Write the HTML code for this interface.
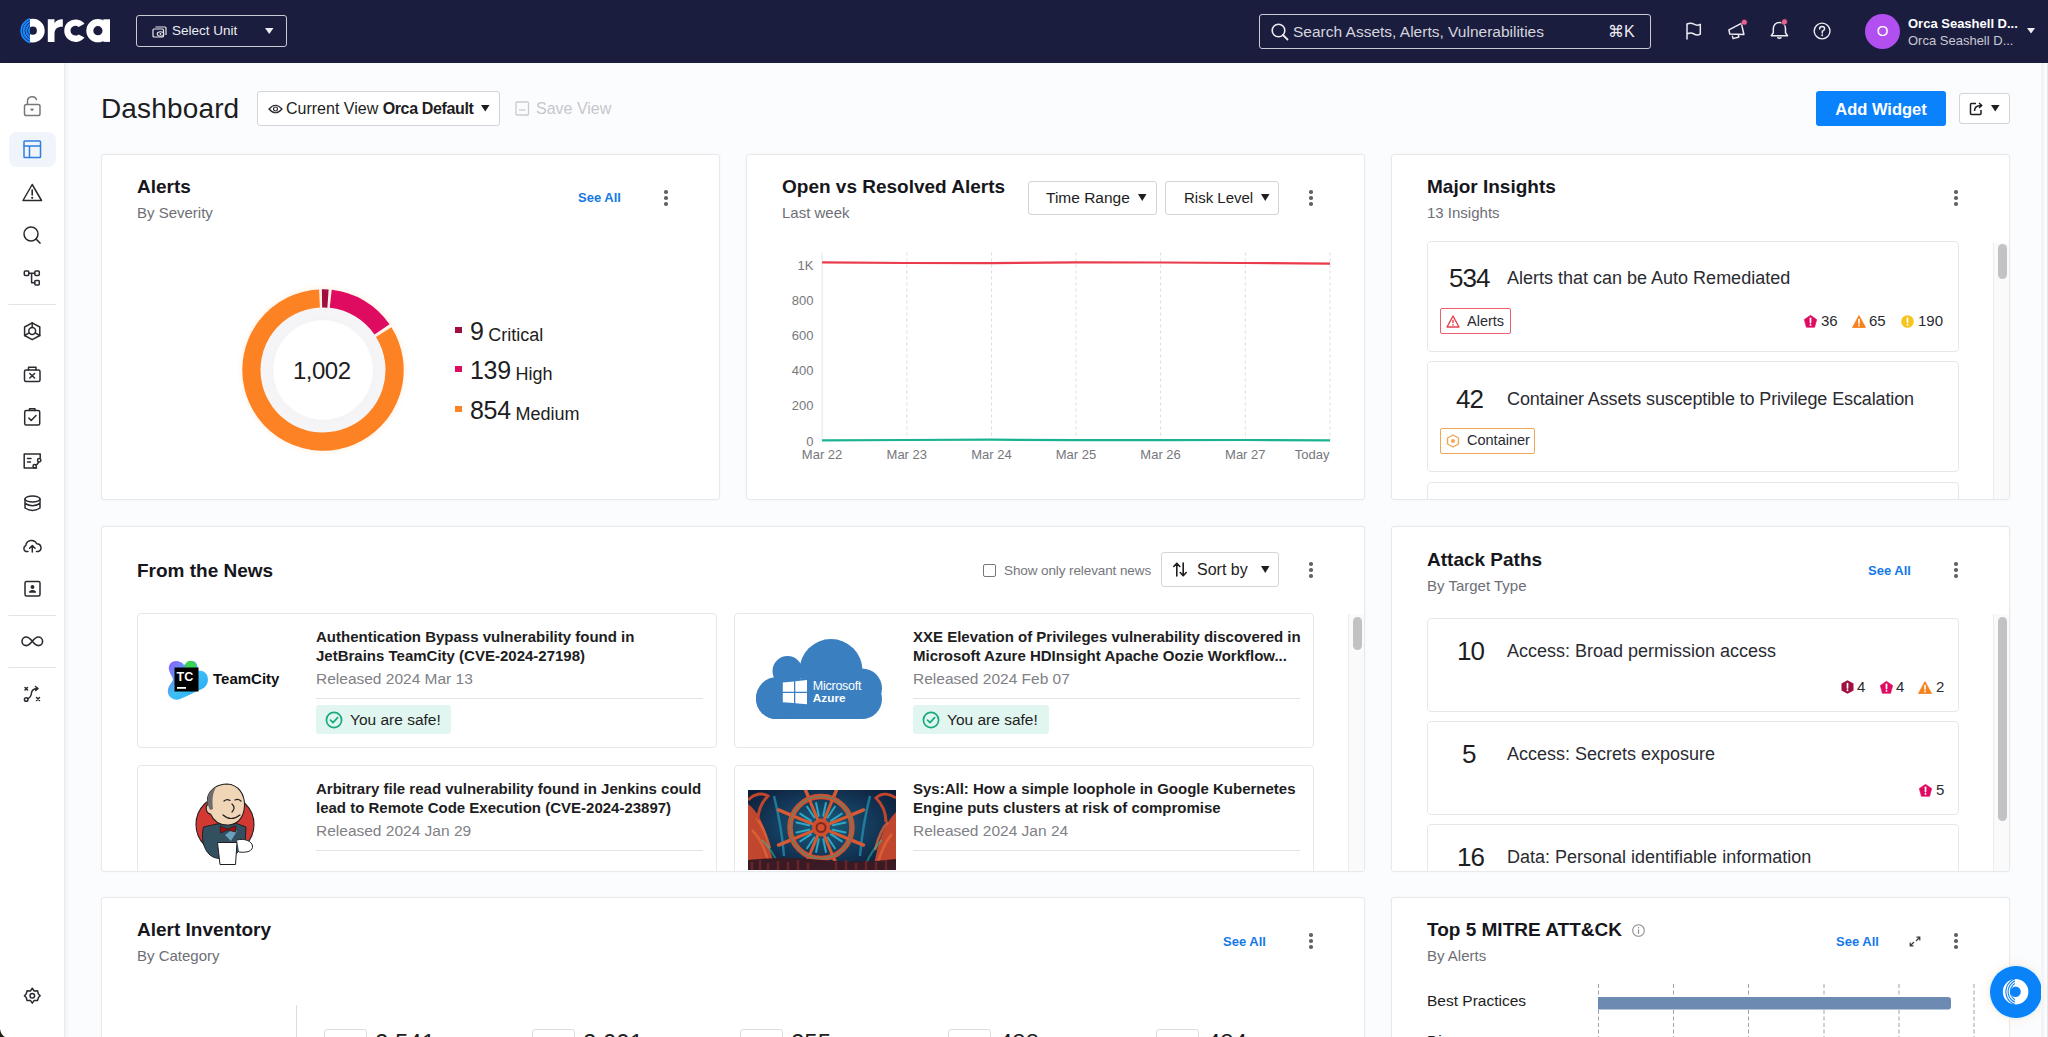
<!DOCTYPE html>
<html><head><meta charset="utf-8">
<style>
*{box-sizing:border-box;margin:0;padding:0}
html,body{width:2048px;height:1037px;overflow:hidden;background:#fbfcfe;font-family:"Liberation Sans",sans-serif;color:#1d1d22}
.abs{position:absolute}
#hdr{position:absolute;left:0;top:0;width:2048px;height:63px;background:#1b1d3e}
#side{position:absolute;left:0;top:63px;width:65px;height:974px;background:#fff;border-right:1px solid #e9eaee;box-shadow:2px 0 4px rgba(0,0,0,0.05)}
.card{position:absolute;background:#fff;border:1px solid #e8e9ec;border-radius:3px;box-shadow:0 0 3px rgba(0,0,0,0.04)}
.ttl{position:absolute;font-weight:bold;font-size:19px;color:#16161c;white-space:nowrap}
.sub{position:absolute;font-size:15px;color:#6e6f76;white-space:nowrap}
.seeall{position:absolute;font-weight:bold;font-size:13px;color:#1479e6;white-space:nowrap}
.kebab{position:absolute;width:4px;height:16px}
.kebab i{position:absolute;left:0.2px;width:3.6px;height:3.6px;border-radius:50%;background:#626369}
.t{position:absolute;white-space:nowrap}
svg{position:absolute;overflow:visible}
.item{position:absolute;background:#fff;border:1px solid #e6e7eb;border-radius:4px}
.num{position:absolute;font-size:26px;letter-spacing:-1px;color:#1d1d22;white-space:nowrap}
.itxt{position:absolute;font-size:18px;margin-top:1.5px;color:#2a2b31;white-space:nowrap}
.ntl{position:absolute;font-size:15px;font-weight:bold;line-height:19px;color:#1d1d22;white-space:nowrap}
.nrel{position:absolute;font-size:15.5px;color:#808186;white-space:nowrap}
.safe{position:absolute;height:29px;border-radius:3px;background:#e1f6f0}
.cnt{position:absolute;font-size:15px;color:#2a2b31;white-space:nowrap}
</style></head>
<body>
<div id="hdr">
<svg style="left:0;top:0" width="130" height="63" viewBox="0 0 130 63">
 <defs><clipPath id="lo"><rect x="0" y="0" width="30" height="63"/></clipPath><clipPath id="lr"><rect x="30" y="0" width="30" height="63"/></clipPath></defs>
 <circle cx="32.8" cy="30.7" r="8" fill="none" stroke="#fff" stroke-width="7.8" clip-path="url(#lr)"/>
 <g clip-path="url(#lo)" fill="none" stroke="#1a86ff" stroke-width="1.9">
  <circle cx="33.5" cy="30.7" r="4.6"/><circle cx="33.5" cy="30.7" r="7.2"/><circle cx="33.5" cy="30.7" r="9.8"/><circle cx="33.5" cy="30.7" r="12.2"/>
 </g>
 <path d="M47.8,19.3 H54.5 V23 C56.5,20 59.5,19 62.8,19.2 V26.8 C57.5,26.5 54.5,29 54.5,34 V41.9 H47.8 Z" fill="#fff"/>
 <path d="M84.5,23.8 A11.3,11.3 0 1 0 84.5,37.6 L78.6,34.4 A4.9,4.9 0 1 1 78.6,27 Z" fill="#fff"/>
 <circle cx="97.9" cy="30.7" r="8.1" fill="none" stroke="#fff" stroke-width="7"/>
 <rect x="103.3" y="19.3" width="6.7" height="22.6" fill="#fff"/>
</svg>
<div class="abs" style="left:136px;top:15px;width:151px;height:32px;border:1.5px solid #c9cad3;border-radius:3px"></div>
<svg style="left:152px;top:26px" width="15" height="12" viewBox="0 0 15 12">
 <path d="M3.5,1 H13 Q14,1 14,2 V9" fill="none" stroke="#e8e8ee" stroke-width="1.2"/>
 <rect x="1" y="3" width="10.5" height="8" rx="1" fill="none" stroke="#e8e8ee" stroke-width="1.2"/>
 <ellipse cx="8.5" cy="8" rx="3.3" ry="2.2" fill="#1b1d3e" stroke="#e8e8ee" stroke-width="1.1"/>
 <circle cx="8.5" cy="8" r="0.9" fill="#e8e8ee"/>
</svg>
<div class="t" style="left:172px;top:23px;font-size:13.5px;color:#ececf2">Select Unit</div>
<svg style="left:265px;top:28px" width="9" height="6" viewBox="0 0 9 6"><path d="M0,0 H8.5 L4.25,6 Z" fill="#ececf2"/></svg>

<div class="abs" style="left:1259px;top:14px;width:392px;height:35px;border:1.5px solid #c9cad3;border-radius:3px"></div>
<svg style="left:1271px;top:23px" width="18" height="18" viewBox="0 0 18 18"><circle cx="7.5" cy="7.5" r="6.3" fill="none" stroke="#ececf2" stroke-width="1.6"/><path d="M12,12 L16.5,16.5" stroke="#ececf2" stroke-width="1.8" stroke-linecap="round"/></svg>
<div class="t" style="left:1293px;top:23px;font-size:15.5px;color:#d4d5dd">Search Assets, Alerts, Vulnerabilities</div>
<div class="t" style="left:1608px;top:22px;font-size:16px;color:#ececf2">&#8984;K</div>

<svg style="left:1684px;top:20px" width="19" height="21" viewBox="0 0 19 21"><path d="M3,19 V4 C5.5,2.8 8,3 10,4.2 C12,5.4 14.2,5.5 16.3,4.4 V14.2 C14.2,15.3 12,15.2 10,14 C8,12.8 5.5,12.8 3,14" fill="none" stroke="#ececf2" stroke-width="1.5" stroke-linejoin="round" stroke-linecap="round"/></svg>
<svg style="left:1726px;top:20px" width="22" height="21" viewBox="0 0 22 21"><path d="M2.9,9.9 L15.4,3.3 L17.9,14.5 L3.8,14.1 Z" fill="none" stroke="#ececf2" stroke-width="1.5" stroke-linejoin="round"/><path d="M6.3,15.8 L7.1,18.6 L12.9,17 L12.4,15" fill="none" stroke="#ececf2" stroke-width="1.4" stroke-linejoin="round"/><circle cx="18.3" cy="2.2" r="3.6" fill="#5a1f45" opacity="0.6"/><circle cx="18.3" cy="2.2" r="2.5" fill="#e2658f"/></svg>
<svg style="left:1769px;top:20px" width="22" height="20" viewBox="0 0 22 20"><path d="M2.3,15.7 H18.5 L16.5,12.8 V8.8 C16.5,5 14,2.5 10.4,2.5 C6.8,2.5 4.3,5 4.3,8.8 V12.8 Z M8.4,17.4 Q10.4,19.2 12.4,17.4" fill="none" stroke="#ececf2" stroke-width="1.5" stroke-linejoin="round"/><circle cx="15.5" cy="1.8" r="3.6" fill="#5a1f45" opacity="0.6"/><circle cx="15.5" cy="1.8" r="2.5" fill="#e2658f"/></svg>
<svg style="left:1812px;top:21px" width="20" height="20" viewBox="0 0 20 20"><circle cx="10.1" cy="10" r="7.9" fill="none" stroke="#ececf2" stroke-width="1.4"/><path d="M7.6,8 Q7.6,5.4 10.1,5.4 Q12.6,5.4 12.6,7.7 Q12.6,9.3 10.3,10.2 V11.9" fill="none" stroke="#ececf2" stroke-width="1.5" stroke-linecap="round"/><circle cx="10.2" cy="14.3" r="0.95" fill="#ececf2"/></svg>

<div class="abs" style="left:1865px;top:14px;width:35px;height:35px;border-radius:50%;background:#b24ff1"></div>
<div class="t" style="left:1865px;top:22px;width:35px;text-align:center;font-size:15px;color:#fff">O</div>
<div class="t" style="left:1908px;top:16px;font-size:13px;font-weight:bold;color:#fff">Orca Seashell D...</div>
<div class="t" style="left:1908px;top:33px;font-size:13px;color:#c8c9d2">Orca Seashell D...</div>
<svg style="left:2027px;top:28px" width="9" height="6" viewBox="0 0 9 6"><path d="M0,0 H8 L4,5.5 Z" fill="#ececf2"/></svg>
</div>
<div id="side">
<div class="abs" style="left:9px;top:69px;width:47px;height:35px;border-radius:8px;background:#f0f5fc"></div>
<svg style="left:0;top:0" width="64" height="974" viewBox="0 63 64 974">
 <g fill="none" stroke="#2a2b31" stroke-width="1.5" stroke-linejoin="round" stroke-linecap="round">
  <!-- lock -->
  <g stroke="#77787e"><rect x="24.5" y="104.5" width="15.5" height="11" rx="1.8"/><path d="M27.5,104.5 V101.5 A4.7,4.7 0 0 1 36.5,99.5"/><path d="M31,109 L33.4,109 L32.2,110.6 Z" fill="#77787e" stroke-width="1"/></g>
  <!-- dashboard -->
  <g stroke="#2f7fe0"><rect x="24" y="141" width="16.5" height="16.5" rx="0.8"/><path d="M24,146 H40.5 M29.5,146 V157.5"/></g>
  <!-- warning -->
  <path d="M32.2,184.5 L41.5,200.5 H23 Z"/><path d="M32.2,190 V195" stroke-width="1.6"/><circle cx="32.2" cy="197.8" r="0.5" stroke-width="1.2"/>
  <!-- search -->
  <circle cx="31" cy="234" r="7"/><path d="M36,239 L40,243" stroke-width="1.7"/>
  <!-- tree -->
  <rect x="24.3" y="271" width="4.5" height="4.5" rx="1"/><rect x="34.8" y="271" width="4.5" height="4.5" rx="1"/><rect x="34.8" y="280.5" width="4.5" height="4.5" rx="1"/><path d="M28.8,273.2 H34.8 M31.6,273.2 V282.8 H34.8"/>
 </g>
 <path d="M8.5,304.5 H56" stroke="#e3e4e8" stroke-width="1"/>
 <g fill="none" stroke="#2a2b31" stroke-width="1.5" stroke-linejoin="round" stroke-linecap="round">
  <!-- hex network -->
  <path d="M32.2,322.8 L39.8,327 V335.5 L32.2,339.7 L24.6,335.5 V327 Z"/><circle cx="32.2" cy="331" r="3.4"/><path d="M32.2,322.8 V327.6 M24.6,335.5 L29.2,332.8 M39.8,335.5 L35.2,332.8"/>
  <!-- briefcase x -->
  <rect x="24.5" y="370" width="15.5" height="11.5" rx="1.5"/><path d="M28.5,370 V367.2 H36 V370"/><path d="M29.8,373.5 L34.6,378 M34.6,373.5 L29.8,378"/>
  <!-- clipboard -->
  <rect x="24.7" y="410.5" width="15" height="14.5" rx="1.5"/><path d="M29.5,410.5 V408.7 H35 V410.5"/><path d="M28.8,418 L31.2,420.4 L36,415.5"/>
  <!-- list form -->
  <path d="M36.5,468 H24.2 V454 H40.2 V457.5"/><path d="M27.5,458.5 H31 M27.5,462 H30.5"/><circle cx="39.2" cy="460.3" r="1.7"/><circle cx="34.7" cy="466.3" r="1.7"/><path d="M38.5,462 Q37.5,465 35.5,464.8"/>
  <!-- database -->
  <ellipse cx="32.5" cy="499" rx="7.5" ry="3"/><path d="M25,499 V508 Q32.5,513 40,508 V499 M25,503.5 Q32.5,508 40,503.5"/>
  <!-- cloud -->
  <path d="M28,551.5 H25.8 A3.3,3.3 0 0 1 25.8,545.5 A5.8,5.8 0 0 1 36.8,543.8 A4,4 0 0 1 38.5,551.5 H36.5"/><path d="M32.3,552 V545.8 M29.6,548.2 L32.3,545.5 L35,548.2"/>
  <!-- id card -->
  <rect x="25" y="581.5" width="15" height="14.5" rx="1.5"/><circle cx="32.5" cy="587" r="1.2" fill="#2a2b31"/><path d="M29.6,592 Q32.5,589.5 35.4,592 Z" fill="#2a2b31"/>
 </g>
 <path d="M8.5,615.5 H56" stroke="#e3e4e8" stroke-width="1"/>
 <g fill="none" stroke="#2a2b31" stroke-width="1.6" stroke-linejoin="round" stroke-linecap="round">
  <path d="M32.3,641.3 C29.5,637.8 27.5,637 26.3,637 A4.3,4.3 0 0 0 26.3,645.6 C27.5,645.6 29.5,644.8 32.3,641.3 C35.1,637.8 37.1,637 38.3,637 A4.3,4.3 0 0 1 38.3,645.6 C37.1,645.6 35.1,644.8 32.3,641.3 Z"/>
 </g>
 <path d="M8.5,667.5 H56" stroke="#e3e4e8" stroke-width="1"/>
 <g fill="none" stroke="#2a2b31" stroke-width="1.5" stroke-linejoin="round" stroke-linecap="round">
  <!-- route -->
  <path d="M25,687.5 L27.5,690 M27.5,687.5 L25,690 M36.5,697.5 L39.5,700.5 M39.5,697.5 L36.5,700.5"/><circle cx="26.2" cy="699.5" r="1.8"/><path d="M27.8,698.5 Q31,697.5 31.5,693 Q32,689 37,688.5 M35.5,686.5 L38,688.5 L35.8,690.5"/>
  <!-- gear -->
  <path d="M32.3,988.3 L34.2,991 L37.5,990.8 L38.4,994 L40.2,995.7 L38.4,997.5 L37.5,1000.6 L34.2,1000.4 L32.3,1003.1 L30.4,1000.4 L27.1,1000.6 L26.2,997.5 L24.4,995.7 L26.2,994 L27.1,990.8 L30.4,991 Z"/><circle cx="32.3" cy="995.7" r="2.3"/>
 </g>
</svg>
</div>

<!-- title row -->
<div class="t" style="left:101px;top:93px;font-size:28px;letter-spacing:0.15px;color:#1d1d22">Dashboard</div>
<div class="abs" style="left:257px;top:91px;width:243px;height:35px;border:1px solid #d3d4d9;border-radius:3px;background:#fff"></div>
<svg style="left:268px;top:104px" width="15" height="10" viewBox="0 0 15 10"><path d="M1,5 Q7.5,-2.5 14,5 Q7.5,12.5 1,5 Z" fill="none" stroke="#2a2b31" stroke-width="1.2"/><circle cx="7.5" cy="5" r="2" fill="none" stroke="#2a2b31" stroke-width="1.2"/></svg>
<div class="t" style="left:286px;top:100px;font-size:16px;color:#1d1d22">Current View <b style="letter-spacing:-0.35px">Orca Default</b></div>
<svg style="left:481px;top:105px" width="9" height="7" viewBox="0 0 9 7"><path d="M0,0 H8.5 L4.25,6.5 Z" fill="#1d1d22"/></svg>
<svg style="left:515px;top:101px" width="15" height="15" viewBox="0 0 15 15"><rect x="1" y="1" width="12.5" height="13" rx="1" fill="none" stroke="#c9cace" stroke-width="1.3"/><path d="M4,9 H10.5" stroke="#c9cace" stroke-width="1.3"/></svg>
<div class="t" style="left:536px;top:100px;font-size:16px;color:#c6c7cc">Save View</div>
<div class="abs" style="left:1816px;top:91px;width:130px;height:35px;border-radius:3px;background:#0a82fc"></div>
<div class="t" style="left:1816px;top:99.5px;width:130px;text-align:center;font-size:16.5px;font-weight:bold;color:#fff">Add Widget</div>
<div class="abs" style="left:1959px;top:93px;width:51px;height:31px;border:1px solid #d3d4d9;border-radius:3px;background:#fff"></div>
<svg style="left:1969px;top:101px" width="16" height="15" viewBox="0 0 16 15"><path d="M7,2.5 H2.5 Q1.5,2.5 1.5,3.5 V12.5 Q1.5,13.5 2.5,13.5 H11 Q12,13.5 12,12.5 V9" fill="none" stroke="#1d1d22" stroke-width="1.5"/><path d="M5.5,10 Q5.5,4.5 12,4.5 M10,2 L12.8,4.5 L10,7" fill="none" stroke="#1d1d22" stroke-width="1.5" stroke-linejoin="round"/></svg>
<svg style="left:1991px;top:105px" width="9" height="7" viewBox="0 0 9 7"><path d="M0,0 H8.5 L4.25,6.5 Z" fill="#1d1d22"/></svg>

<div class="card" style="left:101px;top:154px;width:619px;height:346px">
<div class="ttl" style="left:35px;top:21px">Alerts</div>
<div class="sub" style="left:35px;top:49px">By Severity</div>
<div class="seeall" style="left:476px;top:35px">See All</div>
<div class="kebab" style="left:562px;top:35px"><i style="top:0"></i><i style="top:6px"></i><i style="top:12px"></i></div>
</div>
<svg style="left:0;top:0" width="1" height="1"></svg>
<svg style="left:232px;top:278.5px" width="182" height="182" viewBox="-91 -91 182 182">
 <defs><filter id="sh" x="-50%" y="-50%" width="200%" height="200%"><feGaussianBlur stdDeviation="2"/></filter></defs>
 <circle cx="0" cy="0" r="71" fill="none" stroke="#ff8a2a" stroke-opacity="0.12" stroke-width="22" filter="url(#sh)"/>
 <circle cx="0" cy="0" r="56.5" fill="none" stroke="#f5f5f7" stroke-width="13"/>
 <circle cx="0" cy="0" r="50" fill="#fff"/>
 <circle cx="0" cy="0" r="50" fill="none" stroke="#e9eaee" stroke-width="1" filter="url(#sh)"/>
 <circle cx="0" cy="0" r="49" fill="#fff"/>
 <g fill="none" stroke-width="18.2">
  <path d="M60.72,-37.94 A71.6,71.6 0 1 1 -3.50,-71.51" stroke="#fd8223"/>
  <path d="M7.73,-71.18 A71.6,71.6 0 0 1 59.01,-40.55" stroke="#df0b60"/>
  <path d="M-1.00,-71.59 A71.6,71.6 0 0 1 4.99,-71.43" stroke="#a0103f"/>
 </g>
</svg>
<div class="t" style="left:293px;top:357px;font-size:24px;letter-spacing:-0.5px;color:#1d1d22">1,002</div>
<div class="abs" style="left:455px;top:327px;width:7px;height:6px;background:#a0103f"></div>
<div class="abs" style="left:455px;top:366px;width:7px;height:6px;background:#df0b60"></div>
<div class="abs" style="left:455px;top:406px;width:7px;height:6px;background:#fd8223"></div>
<div class="t" style="left:470px;top:317px;font-size:25px;letter-spacing:-0.3px;color:#1d1d22">9 <span style="font-size:18px;letter-spacing:0;position:relative;top:0.5px;margin-left:-2px">Critical</span></div>
<div class="t" style="left:470px;top:356px;font-size:25px;letter-spacing:-0.3px;color:#1d1d22">139 <span style="font-size:18px;letter-spacing:0;position:relative;top:0.5px;margin-left:-2px">High</span></div>
<div class="t" style="left:470px;top:396px;font-size:25px;letter-spacing:-0.3px;color:#1d1d22">854 <span style="font-size:18px;letter-spacing:0;position:relative;top:0.5px;margin-left:-2px">Medium</span></div>
<div class="card" style="left:746px;top:154px;width:619px;height:346px">
<div class="ttl" style="left:35px;top:21px">Open vs Resolved Alerts</div>
<div class="sub" style="left:35px;top:49px">Last week</div>
<div class="abs" style="left:281px;top:26px;width:129px;height:34px;border:1px solid #d3d4d9;border-radius:3px"></div>
<div class="t" style="left:299px;top:34px;font-size:15.5px;color:#1d1d22">Time Range</div>
<svg style="left:391px;top:38.5px" width="9" height="7" viewBox="0 0 9 7"><path d="M0,0 H8.5 L4.25,7 Z" fill="#1d1d22"/></svg>
<div class="abs" style="left:418px;top:26px;width:114px;height:34px;border:1px solid #d3d4d9;border-radius:3px"></div>
<div class="t" style="left:437px;top:34px;font-size:15px;color:#1d1d22">Risk Level</div>
<svg style="left:514px;top:38.5px" width="9" height="7" viewBox="0 0 9 7"><path d="M0,0 H8.5 L4.25,7 Z" fill="#1d1d22"/></svg>
<div class="kebab" style="left:562px;top:35px"><i style="top:0"></i><i style="top:6px"></i><i style="top:12px"></i></div>
</div>
<svg style="left:0;top:0" width="2048" height="1037" viewBox="0 0 2048 1037">
 <path d="M906.8,252.5 V440" stroke="#dcdde1" stroke-width="1" stroke-dasharray="3,3"/><path d="M991.5,252.5 V440" stroke="#dcdde1" stroke-width="1" stroke-dasharray="3,3"/><path d="M1075.9,252.5 V440" stroke="#dcdde1" stroke-width="1" stroke-dasharray="3,3"/><path d="M1160.6,252.5 V440" stroke="#dcdde1" stroke-width="1" stroke-dasharray="3,3"/><path d="M1245.3,252.5 V440" stroke="#dcdde1" stroke-width="1" stroke-dasharray="3,3"/><path d="M1330,252.5 V440" stroke="#dcdde1" stroke-width="1" stroke-dasharray="3,3"/>
 <path d="M822.1,252.5 V440.5" stroke="#e3e4e8" stroke-width="1"/>
 <g font-family="Liberation Sans" font-size="13" fill="#76777d"><text x="813.5" y="269.8" text-anchor="end">1K</text><text x="813.5" y="304.8" text-anchor="end">800</text><text x="813.5" y="339.8" text-anchor="end">600</text><text x="813.5" y="374.8" text-anchor="end">400</text><text x="813.5" y="410.3" text-anchor="end">200</text><text x="813.5" y="445.8" text-anchor="end">0</text><text x="822.1" y="458.5" text-anchor="middle">Mar 22</text><text x="906.8" y="458.5" text-anchor="middle">Mar 23</text><text x="991.5" y="458.5" text-anchor="middle">Mar 24</text><text x="1075.9" y="458.5" text-anchor="middle">Mar 25</text><text x="1160.6" y="458.5" text-anchor="middle">Mar 26</text><text x="1245.3" y="458.5" text-anchor="middle">Mar 27</text><text x="1329.5" y="458.5" text-anchor="end">Today</text></g>
 <path d="M822.1,262.3 L906.8,263 L991.5,263.2 L1075.9,262.4 L1160.6,262.5 L1245.3,263 L1330,263.6" fill="none" stroke="#ea3a4b" stroke-width="2.2"/>
 <path d="M822.1,440.3 L906.8,440 L991.5,439.7 L1075.9,440.2 L1160.6,440.2 L1245.3,440 L1330,440.3" fill="none" stroke="#19b394" stroke-width="2.2"/>
</svg>
<div class="card" style="left:1391px;top:154px;width:619px;height:346px;overflow:hidden">
<div class="ttl" style="left:35px;top:21px">Major Insights</div>
<div class="sub" style="left:35px;top:49px">13 Insights</div>
<div class="kebab" style="left:562px;top:35px"><i style="top:0"></i><i style="top:6px"></i><i style="top:12px"></i></div>
<div class="abs" style="left:601px;top:88px;width:16px;height:260px;background:#fafafa;border-left:1px solid #ececef"></div>
<div class="abs" style="left:606px;top:89px;width:9px;height:35px;border-radius:5px;background:#c2c2c4"></div>
<div class="item" style="left:35px;top:86px;width:532px;height:111px"></div>
<div class="item" style="left:35px;top:206px;width:532px;height:111px"></div>
<div class="item" style="left:35px;top:327px;width:532px;height:111px"></div>
</div>
<div class="num" style="left:1449px;top:263px">534</div>
<div class="itxt" style="left:1507px;top:266px">Alerts that can be Auto Remediated</div>
<div class="abs" style="left:1440px;top:308px;width:71px;height:26px;border:1.5px solid #ec5f6c;border-radius:2px"></div>
<svg style="left:1446px;top:315px" width="14" height="13" viewBox="0 0 14 13"><path d="M7,1 L13,12 H1 Z" fill="none" stroke="#e8404f" stroke-width="1.4" stroke-linejoin="round"/><path d="M7,4.8 V8" stroke="#e8404f" stroke-width="1.4"/><circle cx="7" cy="9.9" r="0.8" fill="#e8404f"/></svg>
<div class="t" style="left:1467px;top:313px;font-size:14.5px;color:#2a2b31">Alerts</div>
<svg style="left:1804px;top:315px" width="13" height="13" viewBox="0 0 13 13"><path d="M6.5,0.3 L12.7,4.6 L10.6,12.3 H2.4 L0.3,4.6 Z" fill="#df0b60" stroke="#df0b60" stroke-width="0.6" stroke-linejoin="round"/><path d="M6.5,3.3 V7.6" stroke="#fff" stroke-width="1.7" stroke-linecap="round"/><circle cx="6.5" cy="9.9" r="0.95" fill="#fff"/></svg><div class="cnt" style="left:1821px;top:312px">36</div>
<svg style="left:1851.5px;top:315px" width="14" height="13" viewBox="0 0 14 13"><path d="M7,0.5 L13.5,12.5 H0.5 Z" fill="#f6821f" stroke="#f6821f" stroke-width="0.8" stroke-linejoin="round"/><path d="M7,4.5 V8.3" stroke="#fff" stroke-width="1.6" stroke-linecap="round"/><circle cx="7" cy="10.4" r="0.9" fill="#fff"/></svg><div class="cnt" style="left:1869px;top:312px">65</div>
<svg style="left:1900.5px;top:315px" width="13" height="13" viewBox="0 0 13 13"><circle cx="6.5" cy="6.5" r="6.3" fill="#f6c41c"/><path d="M6.5,3 V7.5" stroke="#fff" stroke-width="1.7" stroke-linecap="round"/><circle cx="6.5" cy="9.8" r="0.9" fill="#fff"/></svg><div class="cnt" style="left:1918px;top:312px">190</div>

<div class="num" style="left:1456px;top:384px">42</div>
<div class="itxt" style="left:1507px;top:387px;letter-spacing:-0.12px">Container Assets susceptible to Privilege Escalation</div>
<div class="abs" style="left:1440px;top:428px;width:95px;height:26px;border:1.5px solid #f4a556;border-radius:2px"></div>
<svg style="left:1446px;top:434px" width="14" height="14" viewBox="0 0 14 14"><path d="M7,1 L12.5,4 V10 L7,13 L1.5,10 V4 Z" fill="none" stroke="#f4a556" stroke-width="1.4" stroke-linejoin="round"/><circle cx="7" cy="7" r="2" fill="#f4a556"/></svg>
<div class="t" style="left:1467px;top:432px;font-size:14.5px;color:#2a2b31">Container</div>

<div class="card" style="left:101px;top:526px;width:1264px;height:346px;overflow:hidden">
<div class="ttl" style="left:35px;top:33px">From the News</div>
<div class="abs" style="left:881px;top:37px;width:13px;height:13px;border:1.3px solid #76777d;border-radius:2px"></div>
<div class="t" style="left:902px;top:36px;font-size:13.5px;letter-spacing:-0.1px;color:#76777d">Show only relevant news</div>
<div class="abs" style="left:1059px;top:25px;width:118px;height:35px;border:1px solid #d3d4d9;border-radius:3px"></div>
<svg style="left:1071px;top:35px" width="14" height="15" viewBox="0 0 14 15"><path d="M3.8,14 V1.5 M0.8,4.5 L3.8,1.3 L6.8,4.5 M10.2,1 V13.5 M7.2,10.5 L10.2,13.7 L13.2,10.5" fill="none" stroke="#1d1d22" stroke-width="1.6" stroke-linecap="round" stroke-linejoin="round"/></svg>
<div class="t" style="left:1095px;top:34px;font-size:16px;color:#1d1d22">Sort by</div>
<svg style="left:1159px;top:38.5px" width="9" height="7" viewBox="0 0 9 7"><path d="M0,0 H8.5 L4.25,7 Z" fill="#1d1d22"/></svg>
<div class="kebab" style="left:1207px;top:35px"><i style="top:0"></i><i style="top:6px"></i><i style="top:12px"></i></div>
<div class="abs" style="left:1246px;top:87px;width:16px;height:260px;background:#fafafa;border-left:1px solid #ececef"></div>
<div class="abs" style="left:1251px;top:90px;width:9px;height:33px;border-radius:5px;background:#c2c2c4"></div>

<div class="item" style="left:35px;top:86px;width:580px;height:135px"></div>
<div class="item" style="left:632px;top:86px;width:580px;height:135px"></div>
<div class="item" style="left:35px;top:238px;width:580px;height:135px"></div>
<div class="item" style="left:632px;top:238px;width:580px;height:135px"></div>
</div>

<!-- teamcity logo -->
<svg style="left:166px;top:659px" width="44" height="42" viewBox="0 0 44 42">
 <defs><linearGradient id="tcg" x1="0" y1="0" x2="1" y2="1"><stop offset="0" stop-color="#905cfb"/><stop offset="0.5" stop-color="#3ebff5"/><stop offset="1" stop-color="#2aa7f3"/></linearGradient></defs>
 <path d="M10,2 C5,2 2,6 3,11 C4,15 7,18 7,21 C5,25 1,28 2,34 C3,39 9,42 14,40 C20,38 28,33 36,30 C42,27 43,21 41,16 C39,12 35,11 32,12 C32,6 30,2 26,2 C22,2 20,5 18,6 C16,3 13,2 10,2 Z" fill="url(#tcg)"/>
 <path d="M20,4 C22,1 27,1 29,4 C31,7 30,11 28,13 L18,10 Z" fill="#3bd44f"/>
 <rect x="8.5" y="8.5" width="24" height="24" fill="#000"/>
 <text x="10.6" y="21.5" font-family="Liberation Sans" font-weight="bold" font-size="12.5" fill="#fff">TC</text>
 <rect x="11" y="28" width="9" height="1.8" fill="#fff"/>
</svg>
<div class="t" style="left:213px;top:670px;font-size:15px;font-weight:bold;color:#111">TeamCity</div>

<!-- azure logo -->
<svg style="left:755px;top:637px" width="128" height="84" viewBox="0 0 128 84">
 <g fill="#3a7fc0">
 <rect x="1" y="42" width="126" height="40" rx="20"/>
 <circle cx="32.5" cy="34" r="15"/>
 <circle cx="76" cy="33.5" r="31.5"/>
 <circle cx="107" cy="51.5" r="20"/>
 <circle cx="22" cy="61" r="21"/>
 </g>
 <path d="M27.8,45.5 L39,44.4 V54.7 H27.8 Z M40.3,44.2 L52,43 V54.7 H40.3 Z M27.8,55.9 H39 V66.1 L27.8,65.2 Z M40.3,55.9 H52 V67.3 L40.3,66.2 Z" fill="#fff"/>
 <text x="57.8" y="53.3" font-family="Liberation Sans" font-size="12.5" fill="#fff" letter-spacing="-0.25">Microsoft</text>
 <text x="57.8" y="64.5" font-family="Liberation Sans" font-weight="bold" font-size="11.8" fill="#fff">Azure</text>
</svg>

<!-- jenkins -->
<svg style="left:194.5px;top:783px" width="64" height="86" viewBox="0 0 64 86">
 <circle cx="30" cy="41.5" r="29" fill="#d33833" stroke="#231f20" stroke-width="1.1"/>
 <path d="M8.5,44 C6,54 8,66 15,72 C21,77 30,76 38,74 L50,62 L51,44 L40,40 L22,41 Z" fill="#335061" stroke="#231f20" stroke-width="1"/>
 <path d="M30,52 L36,58 L42,48 L38,46 Z" fill="#6ca0bf"/>
 <path d="M12.5,15 C14.5,6 23,1 32,1 C43,1.5 50,11 49.5,23 C49,33 44,41 34,42 C25,42.5 18.5,38 15.5,31 C11,30.5 10,24 12.5,21.5 Z" fill="#f0d6b7" stroke="#231f20" stroke-width="1.1"/>
 <path d="M12.5,21 C11.5,12 16,6 21,4.5 C17.5,10 17,17 18,26 L15,27 Z" fill="#6d6b6d"/>
 <path d="M29,18 Q32,15.5 35,17.5 M40,17 Q43,15.5 46,18 M37,21 Q41,25 37,29 M28,32 Q36,39 45,32" fill="none" stroke="#231f20" stroke-width="1.2" stroke-linecap="round"/>
 <path d="M25,43 L33,46 L41,42.5 L40.5,49 L33,47 L25.5,50 Z" fill="#a30d0d" stroke="#231f20" stroke-width="0.8"/>
 <path d="M22.5,59.5 H42 L40.5,81.5 H25 Z" fill="#fff" stroke="#231f20" stroke-width="1"/>
 <path d="M42,57 C49,55 57,58 57.5,63 C58,68 52,70 44,69" fill="#fff" stroke="#231f20" stroke-width="1"/>
</svg>

<!-- kubernetes image -->
<svg style="left:748px;top:790px" width="148" height="80" viewBox="0 0 148 80">
 <defs><radialGradient id="kbg" cx="0.5" cy="0.45" r="0.65"><stop offset="0" stop-color="#1b5d7c"/><stop offset="0.6" stop-color="#133556"/><stop offset="1" stop-color="#0d1d36"/></radialGradient>
 <clipPath id="kc"><rect width="148" height="80"/></clipPath></defs>
 <g clip-path="url(#kc)">
 <rect width="148" height="80" fill="url(#kbg)"/>
 <path d="M0,14 C8,20 14,30 18,44 C21,56 24,68 28,80 H0 Z" fill="#c0462d"/>
 <path d="M148,22 C140,30 134,42 130,56 C128,66 126,74 124,80 H148 Z" fill="#c0462d"/>
 <path d="M4,40 C10,46 16,56 20,70 M8,28 C14,34 18,44 22,58 M144,44 C138,50 134,60 130,72 M140,32 C134,38 130,48 127,60" stroke="#e0643a" stroke-width="2.5" fill="none" opacity="0.8"/>
 <path d="M0,10 C6,4 14,2 20,6 C14,12 10,20 10,30 M148,8 C142,4 134,2 128,8 C134,14 138,22 138,32" stroke="#c0462d" stroke-width="3" fill="none"/>
 <path d="M26,6 C30,22 34,40 36,66 M122,6 C118,22 114,40 112,66" stroke="#2aa6c8" stroke-width="2.5" opacity="0.6" fill="none"/>
 <path d="M14,50 C20,56 26,64 30,74 M134,50 C128,56 122,64 118,74" stroke="#2fc3a8" stroke-width="2" opacity="0.5" fill="none"/>
 <path d="M103.5,50.1 L115.5,55.1 M85.6,68.0 L90.6,80.0 M60.4,68.0 L55.4,80.0 M42.5,50.1 L30.5,55.1 M42.5,24.9 L30.5,19.9 M60.4,7.0 L55.4,-5.0 M85.6,7.0 L90.6,-5.0 M103.5,24.9 L115.5,19.9 " stroke="#d65a35" stroke-width="3.4" stroke-linecap="round"/>
 <circle cx="73" cy="37.5" r="31" fill="none" stroke="#cf4f2e" stroke-width="5.5"/>
 <circle cx="73" cy="37.5" r="31" fill="none" stroke="#2f9c86" stroke-width="1.6" opacity="0.6"/>
 <path d="M84.8,39.8 L97.5,42.4 M83.0,44.2 L93.8,51.4 M79.7,47.5 L86.9,58.3 M75.3,49.3 L77.9,62.0 M70.7,49.3 L68.1,62.0 M66.3,47.5 L59.1,58.3 M63.0,44.2 L52.2,51.4 M61.2,39.8 L48.5,42.4 M61.2,35.2 L48.5,32.6 M63.0,30.8 L52.2,23.6 M66.3,27.5 L59.1,16.7 M70.7,25.7 L68.1,13.0 M75.3,25.7 L77.9,13.0 M79.7,27.5 L86.9,16.7 M83.0,30.8 L93.8,23.6 M84.8,35.2 L97.5,32.6 " stroke="#33b8d4" stroke-width="2" stroke-linecap="round" opacity="0.85"/>
 <path d="M80.4,40.6 L100.7,49.0 M76.1,44.9 L84.5,65.2 M69.9,44.9 L61.5,65.2 M65.6,40.6 L45.3,49.0 M65.6,34.4 L45.3,26.0 M69.9,30.1 L61.5,9.8 M76.1,30.1 L84.5,9.8 M80.4,34.4 L100.7,26.0 " stroke="#d9582f" stroke-width="3"/>
 <circle cx="73" cy="37.5" r="9" fill="#cf4f2e"/>
 <circle cx="73" cy="37.5" r="4.5" fill="none" stroke="#7f2a1e" stroke-width="2"/>
 <path d="M0,70 Q37,66 74,70 T148,69 V80 H0 Z" fill="#3a1a25"/><path d="M4,72 v8 M12,70 v10 M20,73 v7 M30,71 v9 M40,72 v8 M50,70 v10 M60,73 v7 M88,72 v8 M98,70 v10 M108,73 v7 M118,71 v9 M128,72 v8 M138,70 v10" stroke="#7a2a2a" stroke-width="2.5" opacity="0.7"/>
 </g>
</svg>

<div class="ntl" style="left:316px;top:627px">Authentication Bypass vulnerability found in<br>JetBrains TeamCity (CVE-2024-27198)</div>
<div class="nrel" style="left:316px;top:670px">Released 2024 Mar 13</div>
<div class="abs" style="left:316px;top:698px;width:387px;height:1px;background:#e3e4e8"></div>
<div class="safe" style="left:316px;top:705px;width:135px"></div>
<svg style="left:325px;top:711px" width="18" height="18" viewBox="0 0 18 18"><circle cx="9" cy="9" r="7.6" fill="none" stroke="#1aa97c" stroke-width="1.7"/><path d="M5.5,9.2 L8,11.6 L12.6,6.6" fill="none" stroke="#1aa97c" stroke-width="1.7" stroke-linecap="round" stroke-linejoin="round"/></svg><div class="t" style="left:350px;top:711px;font-size:15.5px;color:#1d1d22">You are safe!</div>

<div class="ntl" style="left:913px;top:627px">XXE Elevation of Privileges vulnerability discovered in<br>Microsoft Azure HDInsight Apache Oozie Workflow...</div>
<div class="nrel" style="left:913px;top:670px">Released 2024 Feb 07</div>
<div class="abs" style="left:913px;top:698px;width:387px;height:1px;background:#e3e4e8"></div>
<div class="safe" style="left:913px;top:705px;width:136px"></div>
<svg style="left:922px;top:711px" width="18" height="18" viewBox="0 0 18 18"><circle cx="9" cy="9" r="7.6" fill="none" stroke="#1aa97c" stroke-width="1.7"/><path d="M5.5,9.2 L8,11.6 L12.6,6.6" fill="none" stroke="#1aa97c" stroke-width="1.7" stroke-linecap="round" stroke-linejoin="round"/></svg><div class="t" style="left:947px;top:711px;font-size:15.5px;color:#1d1d22">You are safe!</div>

<div class="ntl" style="left:316px;top:779px">Arbitrary file read vulnerability found in Jenkins could<br>lead to Remote Code Execution (CVE-2024-23897)</div>
<div class="nrel" style="left:316px;top:822px">Released 2024 Jan 29</div>
<div class="abs" style="left:316px;top:850px;width:387px;height:1px;background:#e3e4e8"></div>

<div class="ntl" style="left:913px;top:779px">Sys:All: How a simple loophole in Google Kubernetes<br>Engine puts clusters at risk of compromise</div>
<div class="nrel" style="left:913px;top:822px">Released 2024 Jan 24</div>
<div class="abs" style="left:913px;top:850px;width:387px;height:1px;background:#e3e4e8"></div>

<div class="card" style="left:1391px;top:526px;width:619px;height:346px;overflow:hidden">
<div class="ttl" style="left:35px;top:22px">Attack Paths</div>
<div class="sub" style="left:35px;top:50px">By Target Type</div>
<div class="seeall" style="left:476px;top:36px">See All</div>
<div class="kebab" style="left:562px;top:35px"><i style="top:0"></i><i style="top:6px"></i><i style="top:12px"></i></div>
<div class="abs" style="left:601px;top:87px;width:16px;height:260px;background:#fafafa;border-left:1px solid #ececef"></div>
<div class="abs" style="left:606px;top:90px;width:9px;height:204px;border-radius:5px;background:#c2c2c4"></div>
<div class="item" style="left:35px;top:91px;width:532px;height:94px"></div>
<div class="item" style="left:35px;top:194px;width:532px;height:94px"></div>
<div class="item" style="left:35px;top:297px;width:532px;height:94px"></div>
</div>
<div class="num" style="left:1457px;top:636px">10</div>
<div class="itxt" style="left:1507px;top:639px">Access: Broad permission access</div>
<svg style="left:1840.5px;top:680px" width="13" height="14" viewBox="0 0 13 14"><path d="M6.5,0.3 L12.5,3.6 V10.4 L6.5,13.7 L0.5,10.4 V3.6 Z" fill="#a0103f"/><path d="M6.5,3.5 V8" stroke="#fff" stroke-width="1.7" stroke-linecap="round"/><circle cx="6.5" cy="10.3" r="0.95" fill="#fff"/></svg><div class="cnt" style="left:1857px;top:678px">4</div>
<svg style="left:1879.5px;top:680.5px" width="13" height="13" viewBox="0 0 13 13"><path d="M6.5,0.3 L12.7,4.6 L10.6,12.3 H2.4 L0.3,4.6 Z" fill="#df0b60" stroke="#df0b60" stroke-width="0.6" stroke-linejoin="round"/><path d="M6.5,3.3 V7.6" stroke="#fff" stroke-width="1.7" stroke-linecap="round"/><circle cx="6.5" cy="9.9" r="0.95" fill="#fff"/></svg><div class="cnt" style="left:1896px;top:678px">4</div>
<svg style="left:1918px;top:680.5px" width="14" height="13" viewBox="0 0 14 13"><path d="M7,0.5 L13.5,12.5 H0.5 Z" fill="#f6821f" stroke="#f6821f" stroke-width="0.8" stroke-linejoin="round"/><path d="M7,4.5 V8.3" stroke="#fff" stroke-width="1.6" stroke-linecap="round"/><circle cx="7" cy="10.4" r="0.9" fill="#fff"/></svg><div class="cnt" style="left:1936px;top:678px">2</div>
<div class="num" style="left:1462px;top:739px">5</div>
<div class="itxt" style="left:1507px;top:742px">Access: Secrets exposure</div>
<svg style="left:1918.5px;top:783.5px" width="13" height="13" viewBox="0 0 13 13"><path d="M6.5,0.3 L12.7,4.6 L10.6,12.3 H2.4 L0.3,4.6 Z" fill="#df0b60" stroke="#df0b60" stroke-width="0.6" stroke-linejoin="round"/><path d="M6.5,3.3 V7.6" stroke="#fff" stroke-width="1.7" stroke-linecap="round"/><circle cx="6.5" cy="9.9" r="0.95" fill="#fff"/></svg><div class="cnt" style="left:1936px;top:781px">5</div>
<div class="num" style="left:1457px;top:842px">16</div>
<div class="itxt" style="left:1507px;top:845px">Data: Personal identifiable information</div>

<div class="card" style="left:101px;top:897px;width:1264px;height:160px">
<div class="ttl" style="left:35px;top:21px">Alert Inventory</div>
<div class="sub" style="left:35px;top:49px">By Category</div>
<div class="seeall" style="left:1121px;top:36px">See All</div>
<div class="kebab" style="left:1207px;top:35px"><i style="top:0"></i><i style="top:6px"></i><i style="top:12px"></i></div>
</div>
<div class="abs" style="left:296px;top:1005px;width:1px;height:40px;background:#dddee2"></div>
<div class="abs" style="left:324px;top:1029px;width:43px;height:20px;border:1px solid #dcdde1;border-radius:3px"></div><div class="t" style="left:375px;top:1029px;font-size:24px;color:#1d1d22">2,541</div><div class="abs" style="left:532px;top:1029px;width:43px;height:20px;border:1px solid #dcdde1;border-radius:3px"></div><div class="t" style="left:583px;top:1029px;font-size:24px;color:#1d1d22">2,001</div><div class="abs" style="left:740px;top:1029px;width:43px;height:20px;border:1px solid #dcdde1;border-radius:3px"></div><div class="t" style="left:791px;top:1029px;font-size:24px;color:#1d1d22">255</div><div class="abs" style="left:948px;top:1029px;width:43px;height:20px;border:1px solid #dcdde1;border-radius:3px"></div><div class="t" style="left:999px;top:1029px;font-size:24px;color:#1d1d22">488</div><div class="abs" style="left:1156px;top:1029px;width:43px;height:20px;border:1px solid #dcdde1;border-radius:3px"></div><div class="t" style="left:1207px;top:1029px;font-size:24px;color:#1d1d22">484</div>
<div class="card" style="left:1391px;top:897px;width:619px;height:160px">
<div class="ttl" style="left:35px;top:21px">Top 5 MITRE ATT&amp;CK</div>
<div class="sub" style="left:35px;top:49px">By Alerts</div>
<div class="seeall" style="left:444px;top:36px">See All</div>
<div class="kebab" style="left:562px;top:35px"><i style="top:0"></i><i style="top:6px"></i><i style="top:12px"></i></div>
</div>
<svg style="left:1632px;top:924px" width="13" height="13" viewBox="0 0 13 13"><circle cx="6.5" cy="6.5" r="5.8" fill="none" stroke="#8a8b90" stroke-width="1.1"/><path d="M6.5,5.5 V9.8" stroke="#8a8b90" stroke-width="1.2"/><circle cx="6.5" cy="3.7" r="0.7" fill="#8a8b90"/></svg>
<svg style="left:1909px;top:936px" width="12" height="11" viewBox="0 0 12 11"><path d="M1.5,9.5 L5,6 M1.2,6.5 V9.8 H4.5 M10.5,1.5 L7,5 M7.5,1.2 H10.8 V4.5" fill="none" stroke="#3a3b40" stroke-width="1.2"/></svg>
<div class="t" style="left:1427px;top:991.5px;font-size:15.5px;color:#1d1d22">Best Practices</div>
<div class="t" style="left:1427px;top:1032px;font-size:15.5px;color:#1d1d22">Di</div>
<svg style="left:0;top:0" width="2048" height="1037" viewBox="0 0 2048 1037"><path d="M1598.5,984 V1037" stroke="#a2a3a8" stroke-width="1" stroke-dasharray="4,2.5"/><path d="M1673.5,984 V1037" stroke="#a2a3a8" stroke-width="1" stroke-dasharray="4,2.5"/><path d="M1748.5,984 V1037" stroke="#a2a3a8" stroke-width="1" stroke-dasharray="4,2.5"/><path d="M1824,984 V1037" stroke="#a2a3a8" stroke-width="1" stroke-dasharray="4,2.5"/><path d="M1899,984 V1037" stroke="#a2a3a8" stroke-width="1" stroke-dasharray="4,2.5"/><path d="M1974,984 V1037" stroke="#a2a3a8" stroke-width="1" stroke-dasharray="4,2.5"/>
<path d="M1598,997 H1948 Q1951,997 1951,1000 V1006.5 Q1951,1009.5 1948,1009.5 H1598 Z" fill="#6d8bb2"/></svg>
<div class="abs" style="left:1990px;top:966px;width:52px;height:52px;border-radius:50%;background:#0a82f8;box-shadow:0 0 0 1.5px #e4f4ff,0 0 8px 2px rgba(255,170,90,0.18)"></div>
<svg style="left:1989px;top:965px" width="53" height="53" viewBox="0 0 53 53">
 <defs><clipPath id="chl"><rect x="0" y="0" width="26" height="53"/></clipPath></defs>
 <circle cx="26.6" cy="26.7" r="9" fill="none" stroke="#fff" stroke-width="7.6"/>
 <g clip-path="url(#chl)" fill="none" stroke="#0f82f7" stroke-width="1.1">
  <circle cx="30.5" cy="26.7" r="9.2"/><circle cx="30.5" cy="26.7" r="11.4"/><circle cx="30.5" cy="26.7" r="13.6"/>
 </g>
</svg>
<div class="abs" style="left:2041px;top:63px;width:3px;height:974px;background:#f3f4f7"></div><div class="abs" style="left:2047px;top:63px;width:1px;height:974px;background:#e6e7ea"></div>

<svg style="left:0;top:1027px" width="12" height="10" viewBox="0 0 12 10"><path d="M0,2 Q1,8 5,10 H0 Z" fill="#1c1f14"/></svg>
</body></html>
